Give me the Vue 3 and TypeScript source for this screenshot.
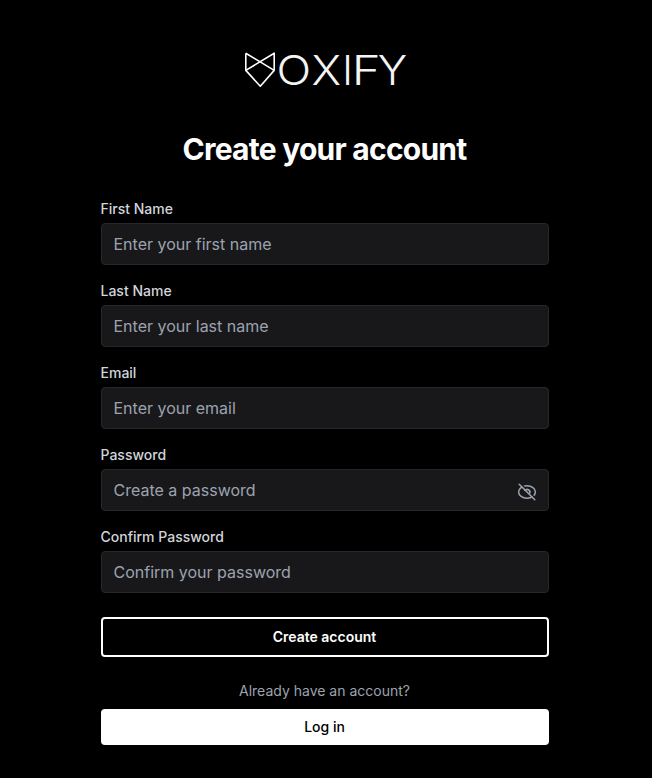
<script setup lang="ts">
import { ref } from 'vue'

interface Field {
  id: string
  label: string
  placeholder: string
  type: 'text' | 'email' | 'password'
  toggle?: boolean
}

const fields: Field[] = [
  { id: 'first-name', label: 'First Name', placeholder: 'Enter your first name', type: 'text' },
  { id: 'last-name', label: 'Last Name', placeholder: 'Enter your last name', type: 'text' },
  { id: 'email', label: 'Email', placeholder: 'Enter your email', type: 'email' },
  { id: 'password', label: 'Password', placeholder: 'Create a password', type: 'password', toggle: true },
  { id: 'confirm', label: 'Confirm Password', placeholder: 'Confirm your password', type: 'password' },
]

const values = ref<Record<string, string>>({})
const visible = ref(false)
</script>

<template>
  <main class="page">
    <svg class="logo" viewBox="0 -10 170 60" role="img">
      <path class="fox" d="M1.8 3.2 30.2 20.4 16.3 36.2 1.8 20.4 30.2 3.2V20.4M1.8 3.2V20.4" />
      <g class="word">
        <text x="32.6" y="35" textLength="34.6" lengthAdjust="spacingAndGlyphs">O</text>
        <text x="67.4" y="35" textLength="29.6" lengthAdjust="spacingAndGlyphs">X</text>
        <text x="98.2" y="35">I</text>
        <text x="107.8" y="35" textLength="29" lengthAdjust="spacingAndGlyphs">F</text>
        <text x="133.8" y="35" textLength="29.4" lengthAdjust="spacingAndGlyphs">Y</text>
      </g>
    </svg>
    <h1 class="title">Create your account</h1>
    <form class="form" @submit.prevent>
      <div v-for="f in fields" :key="f.id" class="field">
        <label class="label" :for="f.id">{{ f.label }}</label>
        <div class="control">
          <input
            :id="f.id"
            v-model="values[f.id]"
            class="input"
            :type="f.toggle && visible ? 'text' : f.type"
            :placeholder="f.placeholder"
          />
          <button v-if="f.toggle" class="toggle" type="button" @click="visible = !visible">
            <svg class="eye" viewBox="0 0 20 20">
              <ellipse cx="10" cy="10" rx="8.4" ry="6.3" />
              <path d="M7.8 8.3A2.9 2.9 0 0 1 12.8 10.8" />
              <path class="gap" d="M3.2 1.2 18.8 16.8" />
              <path d="M2.2 2.2 17.8 17.8" />
              <path d="M7.9 8.2Q10.6 6.4 12.6 8.9L12.8 11" />
            </svg>
          </button>
        </div>
      </div>
      <button class="create" type="submit">Create account</button>
    </form>
    <p class="hint">Already have an account?</p>
    <button class="login" type="button">Log in</button>
  </main>
</template>

<style>
body {
  background: #000;
}
</style>

<style scoped>
.page {
  box-sizing: border-box;
  display: flex;
  flex-direction: column;
  width: 649px;
  min-height: 778px;
  padding: 40px 100.5px 33px;
  background: #000;
  color: #fff;
  font-family: Inter, sans-serif;
}
.logo {
  display: block;
  width: 170px;
  height: 60px;
  margin-left: 143.5px;
}
.fox {
  fill: none;
  stroke: #fff;
  stroke-width: 1.6;
  stroke-linejoin: round;
}
.word {
  fill: #f4f4f4;
  font-size: 40.5px;
  font-weight: 260;
}
.title {
  margin: 31px 0 0;
  font-size: 30px;
  line-height: 36px;
  font-weight: 700;
  letter-spacing: -0.75px;
  text-align: center;
}
.form {
  display: flex;
  flex-direction: column;
  gap: 16px;
  margin-top: 32px;
}
.field {
  display: flex;
  flex-direction: column;
  gap: 4px;
}
.label {
  color: #d1d5db;
  font-size: 14px;
  line-height: 20px;
  font-weight: 500;
}
.control {
  position: relative;
  display: flex;
}
.input {
  box-sizing: border-box;
  width: 100%;
  height: 42px;
  padding: 8px 12px;
  border: 1px solid #27272a;
  border-radius: 4px;
  outline: none;
  background: #18181b;
  color: #fff;
  font: 400 16px/24px Inter, sans-serif;
}
.input::placeholder {
  color: #9ca3af;
  opacity: 1;
}
.toggle {
  position: absolute;
  top: 13px;
  right: 11.5px;
  display: flex;
  padding: 0;
  border: 0;
  background: none;
}
.eye {
  width: 20px;
  height: 20px;
  fill: none;
  stroke: #9ca3af;
  stroke-width: 1.5;
  stroke-linecap: round;
}
.gap {
  stroke: #18181b;
}
.create,
.login {
  box-sizing: border-box;
  padding: 0;
  border-radius: 4px;
  font: 600 14px/20px Inter, sans-serif;
  text-align: center;
}
.create {
  height: 40px;
  margin-top: 8px;
  border: 2px solid #fff;
  background: #000;
  color: #fff;
}
.hint {
  margin: 24px 0 8px;
  color: #9ca3af;
  font-size: 14px;
  line-height: 20px;
  text-align: center;
}
.login {
  height: 36px;
  border: 0;
  background: #fff;
  color: #000;
  font-weight: 500;
}
</style>
